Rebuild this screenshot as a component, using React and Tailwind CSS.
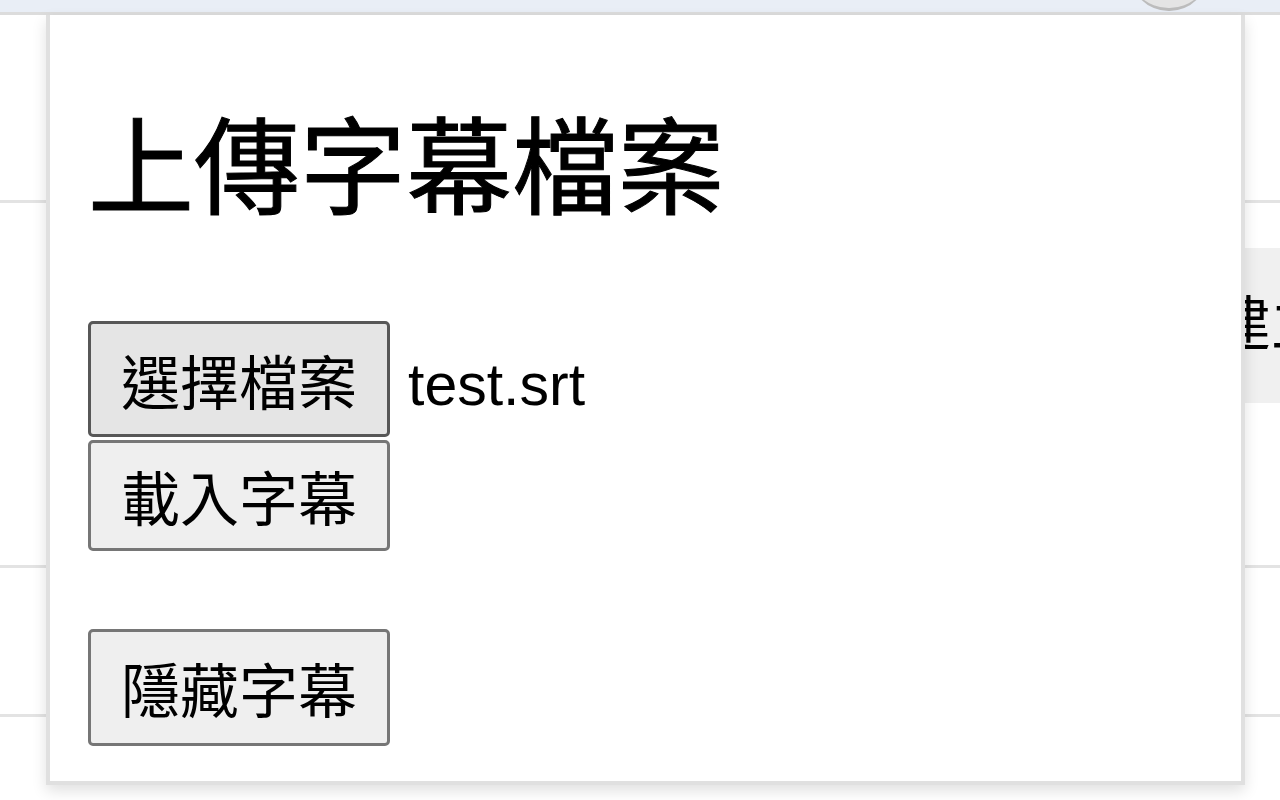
import React from "react";

const cjk = { fontFamily: '"Noto Sans CJK TC", "Noto Sans CJK SC", sans-serif' };
const mixed = { fontFamily: '"Liberation Sans", "Noto Sans CJK TC", sans-serif' };

function Btn({ children, active, h }) {
  return (
    <button
      type="button"
      className={
        "flex w-[302px] items-center justify-center rounded-[5px] border-[3px] text-[59px] leading-none text-black " +
        (active ? "border-[#575757] bg-[#e5e5e5] " : "border-[#767676] bg-[#efefef] ") +
        h
      }
      style={cjk}
    >
      {children}
    </button>
  );
}

function Backdrop() {
  return (
    <div className="flex h-full w-full flex-col bg-white">
      <div className="relative h-[12px] bg-[#e9eef6]">
        <div className="absolute left-[1130px] top-[-66px] h-[77px] w-[78px] rounded-full border-b-[3px] border-[#bcbcbc] bg-[#e4e4e4]" />
      </div>
      <div className="h-[3px] bg-[#dcdcdc]" />
      <div className="h-[188px] border-b-[3px] border-[#e3e3e3]" />
      <div className="h-[45px]" />
      <div className="flex h-[155px]">
        <div
          className="ml-[1200px] flex flex-1 items-center overflow-hidden whitespace-nowrap bg-[#f0f0f0] pl-[12px] pb-[12px] text-[59px] leading-none text-black"
          style={cjk}
        >
          建立
        </div>
      </div>
      <div className="h-[165px] border-b-[3px] border-[#e3e3e3]" />
      <div className="h-[149px] border-b-[3px] border-[#e3e3e3]" />
    </div>
  );
}

export default function App() {
  return (
    <div className="relative h-[800px] w-[1280px] overflow-hidden bg-white">
      <Backdrop />
      <div className="absolute left-[46px] top-[15px] h-[770px] w-[1199px] border-x-[4px] border-b-[4px] border-[#e0e0e0] bg-white shadow-[0_6px_14px_rgba(0,0,0,0.12)]">
        <div className="flex flex-col pl-[38px] pt-[92px]">
          <h1 className="h-[150px] text-[106px] font-normal leading-none text-black [-webkit-text-stroke:1px_black]" style={cjk}>
            上傳字幕檔案
          </h1>
          <div className="mt-[64px] flex items-baseline gap-[18px]">
            <Btn active h="h-[116px]">選擇檔案</Btn>
            <span className="text-[59px] text-black" style={mixed}>test.srt</span>
          </div>
          <div className="mt-[3px]">
            <Btn h="h-[111px]">載入字幕</Btn>
          </div>
          <div className="mt-[78px]">
            <Btn h="h-[117px]">隱藏字幕</Btn>
          </div>
        </div>
      </div>
    </div>
  );
}
